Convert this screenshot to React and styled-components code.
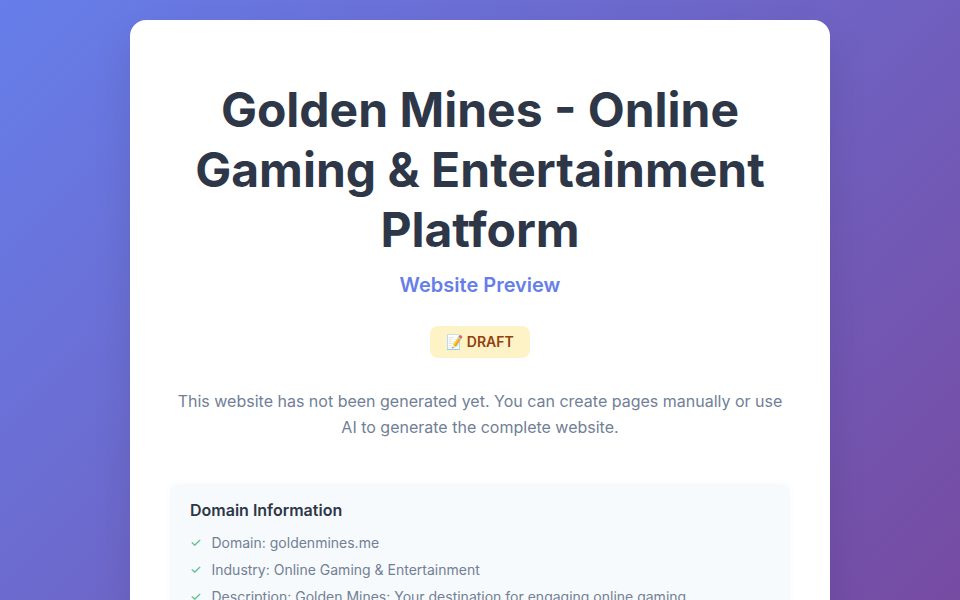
import React from 'react';
import styled, { createGlobalStyle } from 'styled-components';

const GlobalStyle = createGlobalStyle`
  * {
    box-sizing: border-box;
  }

  html, body {
    margin: 0;
    padding: 0;
  }

  body {
    font-family: Inter, 'Noto Sans', sans-serif;
    background: linear-gradient(135deg, #667eea 0%, #764ba2 100%);
    min-height: 100vh;
    overflow: hidden;
  }
`;

const StyledWrapper = styled.div`
  height: 100vh;
  display: flex;
  justify-content: center;
  align-items: flex-start;
  padding: 20px;
  overflow: hidden;
`;

const StyledCard = styled.div`
  background: #ffffff;
  width: 700px;
  border-radius: 16px;
  padding: 60px 40px;
  box-shadow: 0 20px 40px rgba(0, 0, 0, 0.1);
  text-align: center;
`;

const StyledTitle = styled.h1`
  margin: 0 0 10px;
  font-size: 48px;
  line-height: 60px;
  font-weight: 700;
  color: #2d3748;
`;

const StyledSubtitle = styled.p`
  margin: 0 0 26px;
  font-size: 20px;
  line-height: 30px;
  font-weight: 600;
  color: #667eea;
`;

const StyledBadge = styled.span`
  display: inline-block;
  background: #fef3c7;
  color: #92400e;
  font-size: 14px;
  font-weight: 600;
  line-height: 16px;
  padding: 8px 16px;
  border-radius: 8px;
  margin-bottom: 30px;
`;

const StyledDescription = styled.p`
  margin: 0 0 44px;
  font-size: 16px;
  line-height: 26px;
  color: #718096;
`;

const StyledInfoBox = styled.div`
  background: #f7fafc;
  border-radius: 8px;
  padding: 16px 20px;
  text-align: left;
  box-shadow: 0 0 8px rgba(0, 0, 0, 0.03);
`;

const StyledInfoHeading = styled.h3`
  margin: 0 0 9px;
  font-size: 16px;
  line-height: 20px;
  font-weight: 600;
  color: #2d3748;
`;

const StyledList = styled.ul`
  list-style: none;
  margin: 0;
  padding: 0;
`;

const StyledItem = styled.li`
  display: flex;
  gap: 10px;
  font-size: 14px;
  line-height: 27px;
  color: #718096;

  &::before {
    content: '✓';
    color: #48bb78;
    font-size: 13px;
  }
`;

const items = [
  'Domain: goldenmines.me',
  'Industry: Online Gaming & Entertainment',
  'Description: Golden Mines: Your destination for engaging online gaming',
];

const App = () => (
  <>
    <GlobalStyle />
    <StyledWrapper>
      <StyledCard>
        <StyledTitle>Golden Mines - Online Gaming &amp; Entertainment Platform</StyledTitle>
        <StyledSubtitle>Website Preview</StyledSubtitle>
        <StyledBadge>📝 DRAFT</StyledBadge>
        <StyledDescription>
          This website has not been generated yet. You can create pages manually or use AI to generate the
          complete website.
        </StyledDescription>
        <StyledInfoBox>
          <StyledInfoHeading>Domain Information</StyledInfoHeading>
          <StyledList>
            {items.map((item) => (
              <StyledItem key={item}>{item}</StyledItem>
            ))}
          </StyledList>
        </StyledInfoBox>
      </StyledCard>
    </StyledWrapper>
  </>
);

export default App;
